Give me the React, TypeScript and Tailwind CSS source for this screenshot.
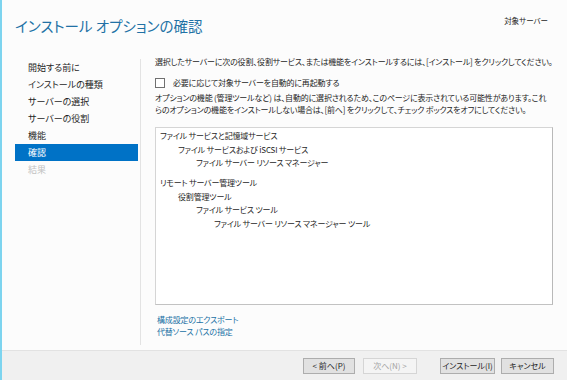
import React from "react"

const navItems = [
  { label: "開始する前に", state: "normal" },
  { label: "インストールの種類", state: "normal" },
  { label: "サーバーの選択", state: "normal" },
  { label: "サーバーの役割", state: "normal" },
  { label: "機能", state: "normal" },
  { label: "確認", state: "active" },
  { label: "結果", state: "disabled" },
]

const treeGroups = [
  [
    { text: "ファイル サービスと記憶域サービス", level: 0 },
    { text: "ファイル サービスおよび iSCSI サービス", level: 1 },
    { text: "ファイル サーバー リソース マネージャー", level: 2 },
  ],
  [
    { text: "リモート サーバー管理ツール", level: 0 },
    { text: "役割管理ツール", level: 1 },
    { text: "ファイル サービス ツール", level: 2 },
    { text: "ファイル サーバー リソース マネージャー ツール", level: 3 },
  ],
]

const indent = ["pl-0", "pl-[18px]", "pl-[36px]", "pl-[54px]"]

export default function App() {
  return (
    <div className="w-[567px] h-[380px] overflow-hidden flex flex-col bg-[#fcfcfc] border-l-2 border-[#7dd4ef] text-[#1e1e1e] font-['Noto_Sans_CJK_JP',sans-serif] [font-feature-settings:'palt']">
      {/* header */}
      <div className="h-[55px] shrink-0 flex justify-between items-start">
        <h1 className="ml-[13px] mt-[15px] text-[14.5px] leading-[22px] font-normal text-[#2171a5] whitespace-nowrap">
          インストール オプションの確認
        </h1>
        <div className="mt-[15px] mr-[19px] text-[7.5px] leading-[12px]">対象サーバー</div>
      </div>

      {/* body */}
      <div className="flex-1 flex min-h-0">
        <div className="w-[138px] shrink-0 pt-[4px] pl-[13px] pb-[5px]">
          <div className="h-full border-r border-[#e3e3e3] pr-[2px] -mr-px">
            {navItems.map((item) => (
              <div
                key={item.label}
                className={
                  item.state === "active"
                    ? "h-[17px] pl-[13px] flex items-center text-[9px] bg-[#0072c6] text-white"
                    : item.state === "disabled"
                    ? "h-[17px] pl-[13px] flex items-center text-[9px] text-[#c2c2c2]"
                    : "h-[17px] pl-[13px] flex items-center text-[9px]"
                }
              >
                {item.label}
              </div>
            ))}
          </div>
        </div>

        <div className="flex-1 pl-[15px] pr-[14px] pt-[1px] text-[8px] leading-[12px] tracking-[-0.18px] whitespace-nowrap">
          <p>
            選択したサーバーに次の役割、役割サービス、または機能をインストールするには、[インストール] をクリックしてください。
          </p>
          <label className="mt-[9px] flex items-center">
            <span className="w-[10px] h-[10px] border border-[#707070] bg-white" />
            <span className="ml-[8px]">必要に応じて対象サーバーを自動的に再起動する</span>
          </label>
          <p className="mt-[3px]">
            オプションの機能 (管理ツールなど) は、自動的に選択されるため、このページに表示されている可能性があります。これ
            <br />
            らのオプションの機能をインストールしない場合は、[前へ] をクリックして、チェック ボックスをオフにしてください。
          </p>

          <div className="mt-[11px] h-[178px] bg-white border border-[#d5d5d5] border-r-[#b9b9b9] border-b-[#c2c2c2] pl-[4px] pt-px flex flex-col gap-[6px]">
            {treeGroups.map((group, gi) => (
              <div key={gi} className="flex flex-col">
                {group.map((row) => (
                  <div key={row.text} className={`h-[13.7px] leading-[13.7px] ${indent[row.level]}`}>
                    {row.text}
                  </div>
                ))}
              </div>
            ))}
          </div>

          <div className="mt-[9px] pl-[2px] flex flex-col text-[#2171a5]">
            <span className="leading-[12px]">構成設定のエクスポート</span>
            <span className="leading-[12px]">代替ソース パスの指定</span>
          </div>
        </div>
      </div>

      {/* footer */}
      <div className="h-[30px] shrink-0 bg-[#f0f0f0] border-t border-[#e2e2e2] flex items-center justify-end pr-[13px] text-[8px] whitespace-nowrap">
        <button className="w-[52px] h-[16px] bg-[#e1e1e1] border border-[#adadad] flex items-center justify-center">
          &lt; 前へ(P)
        </button>
        <button className="ml-[8px] w-[54px] h-[16px] bg-[#f4f4f4] border border-[#d5d5d5] text-[#a3a3a3] flex items-center justify-center">
          次へ(N) &gt;
        </button>
        <button className="ml-[23px] w-[55px] h-[16px] bg-[#e1e1e1] border border-[#adadad] flex items-center justify-center">
          インストール(I)
        </button>
        <button className="ml-[6px] w-[53px] h-[16px] bg-[#e1e1e1] border border-[#adadad] flex items-center justify-center">
          キャンセル
        </button>
      </div>
    </div>
  )
}
